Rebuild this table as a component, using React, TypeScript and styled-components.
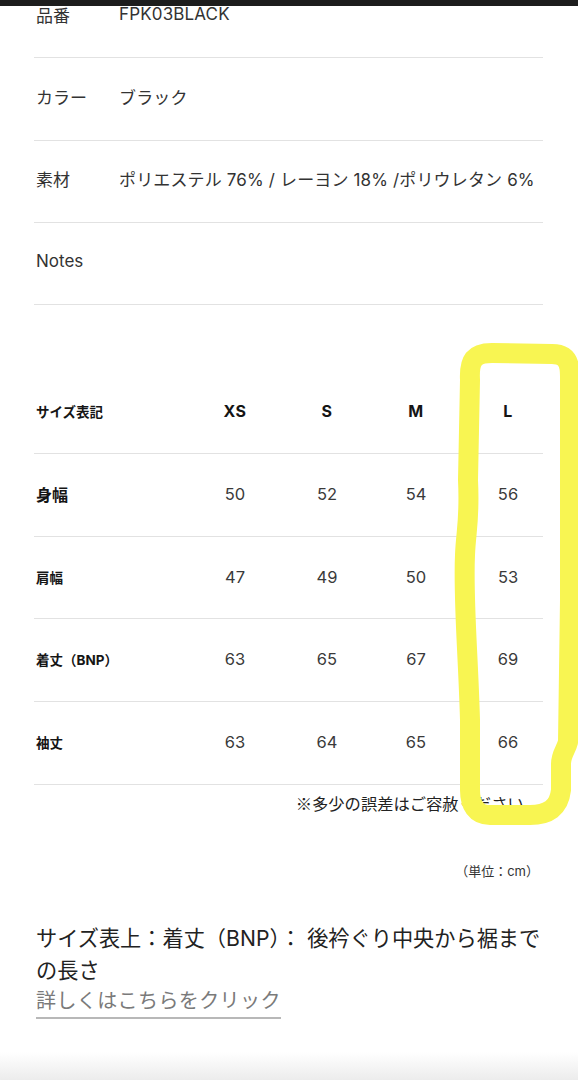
import React from "react";
import styled, { createGlobalStyle } from "styled-components";

const GlobalStyle = createGlobalStyle`
  html, body {
    margin: 0;
    padding: 0;
    background: #ffffff;
  }
  body {
    font-family: "Inter", "Noto Sans CJK JP", sans-serif;
    color: #333333;
    -webkit-font-smoothing: antialiased;
  }
`;

const Screen = styled.div`
  position: relative;
  width: 578px;
  height: 1080px;
  overflow: hidden;
  background: #ffffff;
`;

const TopBar = styled.div`
  position: absolute;
  top: 0;
  left: 0;
  right: 0;
  height: 6px;
  background: #1d1d1d;
  z-index: 2;
`;

const Content = styled.main`
  display: flex;
  flex-direction: column;
  padding: 0 35px 0 34px;
  margin-top: -24px;
`;

const InfoList = styled.dl`
  margin: 0;
  display: flex;
  flex-direction: column;
`;

const InfoRow = styled.div`
  display: grid;
  grid-template-columns: 85px 1fr;
  align-items: center;
  box-sizing: border-box;
  height: 82.3px;
  padding-bottom: 5px;
  border-bottom: 1px solid #e2e2e2;
  font-size: 17px;
  color: #333333;
`;

const InfoLabel = styled.dt`
  margin: 0;
  padding-left: 2px;
  white-space: nowrap;
`;

const InfoValue = styled.dd`
  margin: 0;
  white-space: nowrap;
  letter-spacing: 0.15px;
`;

const SizeTable = styled.div`
  margin-top: 66px;
  display: flex;
  flex-direction: column;
`;

const SizeRow = styled.div`
  display: grid;
  grid-template-columns: 156px 90px 94px 84px 100px;
  align-items: center;
  box-sizing: border-box;
  height: 82.75px;
  padding-bottom: 2px;
  border-bottom: 1px solid #e2e2e2;
`;

const RowLabel = styled.div<{ $size: number }>`
  padding-left: 2px;
  font-weight: 700;
  font-size: ${(p) => p.$size}px;
  color: #151515;
  white-space: nowrap;
`;

const HeadCell = styled.div`
  text-align: center;
  font-weight: 700;
  font-size: 16px;
  color: #151515;
  letter-spacing: 0.4px;
`;

const Cell = styled.div`
  text-align: center;
  font-size: 16.5px;
  font-weight: 400;
  color: #3a3a3a;
`;

const Disclaimer = styled.p`
  margin: 6px 3px 0 0;
  text-align: right;
  font-family: "Noto Sans CJK JP", sans-serif;
  font-size: 16.3px;
  line-height: 24px;
  color: #222222;
`;

const Unit = styled.p`
  margin: 46px 4px 0 0;
  text-align: right;
  font-size: 13px;
  line-height: 20px;
  color: #333333;
`;

const Explanation = styled.p`
  margin: 41px 0 0 2px;
  font-size: 21.2px;
  line-height: 32px;
  color: #222222;
`;

const FirstLine = styled.span`
  white-space: nowrap;
`;

const DetailLink = styled.a`
  align-self: flex-start;
  margin: 0 0 0 2px;
  padding-bottom: 0;
  font-size: 20px;
  line-height: 31px;
  color: #7a7a7a;
  text-decoration: none;
  border-bottom: 2px solid #b8b8b8;
  letter-spacing: 0.4px;
`;

const BottomFade = styled.div`
  position: absolute;
  left: 0;
  right: 0;
  bottom: 0;
  height: 28px;
  background: linear-gradient(to bottom, rgba(240, 240, 240, 0), #ececec);
  pointer-events: none;
`;

const Highlight = styled.svg`
  position: absolute;
  top: 0;
  left: 0;
  width: 578px;
  height: 1080px;
  pointer-events: none;
  z-index: 3;
`;

const info = [
  { label: "品番", value: "FPK03BLACK" },
  { label: "カラー", value: "ブラック" },
  { label: "素材", value: "ポリエステル 76% / レーヨン 18% /ポリウレタン 6%" },
  { label: "Notes", value: "" },
];

const sizes = ["XS", "S", "M", "L"];

const rows = [
  { label: "身幅", size: 16, values: [50, 52, 54, 56] },
  { label: "肩幅", size: 13.5, values: [47, 49, 50, 53] },
  { label: "着丈（BNP）", size: 13.5, values: [63, 65, 67, 69] },
  { label: "袖丈", size: 13.5, values: [63, 64, 65, 66] },
];

export default function App() {
  return (
    <Screen>
      <GlobalStyle />
      <TopBar />
      <Content>
        <InfoList>
          {info.map((r) => (
            <InfoRow key={r.label}>
              <InfoLabel>{r.label}</InfoLabel>
              <InfoValue>{r.value}</InfoValue>
            </InfoRow>
          ))}
        </InfoList>

        <SizeTable>
          <SizeRow>
            <RowLabel $size={13.5}>サイズ表記</RowLabel>
            {sizes.map((s) => (
              <HeadCell key={s}>{s}</HeadCell>
            ))}
          </SizeRow>
          {rows.map((r) => (
            <SizeRow key={r.label}>
              <RowLabel $size={r.size}>{r.label}</RowLabel>
              {r.values.map((v, i) => (
                <Cell key={i}>{v}</Cell>
              ))}
            </SizeRow>
          ))}
        </SizeTable>

        <Disclaimer>※多少の誤差はご容赦ください。</Disclaimer>
        <Unit>（単位：cm）</Unit>

        <Explanation>
          <FirstLine>サイズ表上：着丈（BNP）： 後衿ぐり中央から裾まで</FirstLine>
          <br />
          の長さ
        </Explanation>
        <DetailLink href="#">詳しくはこちらをクリック</DetailLink>
      </Content>
      <BottomFade />
      <Highlight viewBox="0 0 578 1080">
        <path
          d="M 470 380 C 469 360, 474 353, 492 353 L 552 354 C 566 354, 570 362, 570 376 L 570 600 L 568 742 C 566 750, 561 754, 561 764 L 561 790 C 559 808, 548 815, 530 815 L 490 815 C 476 815, 470 805, 470 790 L 470 720 C 468 650, 463 600, 465 555 C 466 530, 470 520, 468 480 L 470 380 Z"
          fill="none"
          stroke="#f8f552"
          strokeWidth={20}
          strokeLinejoin="round"
          strokeLinecap="round"
        />
      </Highlight>
    </Screen>
  );
}
